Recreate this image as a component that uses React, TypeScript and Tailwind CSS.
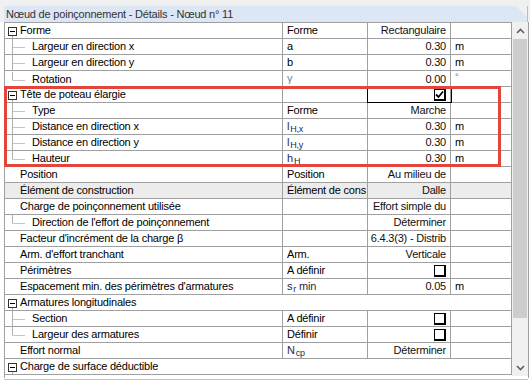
import type { ReactNode } from "react";

type Kind = "plain" | "parent" | "child" | "last";

type Row = {
  label: string;
  kind: Kind;
  symbol?: ReactNode;
  value?: ReactNode;
  unit?: ReactNode;
  span?: boolean;
  shaded?: boolean;
  focus?: boolean;
};

function Box({ checked = false }: { checked?: boolean }) {
  return (
    <span className="inline-flex w-[12px] h-[12px] items-center justify-center border border-black border-r-2 border-b-2 bg-white">
      {checked && (
        <svg width="9" height="9" viewBox="0 0 9 9">
          <path d="M1 4.5 L3.5 7 L8 1.5" fill="none" stroke="#000" strokeWidth="1.8" />
        </svg>
      )}
    </span>
  );
}

function Sub({ base, sub, after }: { base: string; sub: string; after?: string }) {
  return (
    <span className="text-[#1c2a48]">
      {base}
      <span className="text-[9px] relative top-[2px] ml-[1px]">{sub}</span>
      {after}
    </span>
  );
}

const rows: Row[] = [
  { label: "Forme", kind: "parent", symbol: "Forme", value: "Rectangulaire" },
  { label: "Largeur en direction x", kind: "child", symbol: "a", value: "0.30", unit: "m" },
  { label: "Largeur en direction y", kind: "child", symbol: "b", value: "0.30", unit: "m" },
  {
    label: "Rotation",
    kind: "last",
    symbol: <span className="text-[#6d86b2]">γ</span>,
    value: "0.00",
    unit: <span className="text-[9px] text-[#666] relative -top-[2px]">°</span>,
  },
  { label: "Tête de poteau élargie", kind: "parent", value: <Box checked />, focus: true },
  { label: "Type", kind: "child", symbol: "Forme", value: "Marche" },
  { label: "Distance en direction x", kind: "child", symbol: <Sub base="l" sub="H,x" />, value: "0.30", unit: "m" },
  { label: "Distance en direction y", kind: "child", symbol: <Sub base="l" sub="H,y" />, value: "0.30", unit: "m" },
  { label: "Hauteur", kind: "last", symbol: <Sub base="h" sub="H" />, value: "0.30", unit: "m" },
  { label: "Position", kind: "plain", symbol: "Position", value: "Au milieu de" },
  { label: "Élément de construction", kind: "plain", symbol: "Élément de cons", value: "Dalle", shaded: true },
  { label: "Charge de poinçonnement utilisée", kind: "plain", value: "Effort simple du" },
  { label: "Direction de l'effort de poinçonnement", kind: "last", value: "Déterminer" },
  { label: "Facteur d'incrément de la charge β", kind: "plain", value: "6.4.3(3) - Distrib" },
  { label: "Arm. d'effort tranchant", kind: "plain", symbol: "Arm.", value: "Verticale" },
  { label: "Périmètres", kind: "plain", symbol: "A définir", value: <Box /> },
  {
    label: "Espacement min. des périmètres d'armatures",
    kind: "plain",
    symbol: <Sub base="s" sub="r" after=" min" />,
    value: "0.05",
    unit: "m",
  },
  { label: "Armatures longitudinales", kind: "parent", span: true },
  { label: "Section", kind: "child", symbol: "A définir", value: <Box /> },
  { label: "Largeur des armatures", kind: "last", symbol: "Définir", value: <Box /> },
  { label: "Effort normal", kind: "plain", symbol: <Sub base="N" sub="cp" />, value: "Déterminer" },
  { label: "Charge de surface déductible", kind: "parent", span: true },
];

function Tree({ kind }: { kind: Kind }) {
  if (kind === "plain") return <span className="w-[15px] shrink-0" />;
  if (kind === "parent")
    return (
      <svg width="15" height="15" className="shrink-0">
        <line x1="7.5" y1="12" x2="7.5" y2="15" stroke="#b0b0b0" />
        <rect x="3.5" y="4.5" width="8" height="8" fill="#fff" stroke="#333" />
        <line x1="5" y1="8.5" x2="10" y2="8.5" stroke="#000" />
      </svg>
    );
  return (
    <svg width="27" height="15" className="shrink-0">
      <line x1="7.5" y1="0" x2="7.5" y2={kind === "last" ? 8.5 : 15} stroke="#b0b0b0" />
      <line x1="8" y1="8.5" x2="20" y2="8.5" stroke="#c4c4c4" />
    </svg>
  );
}

function TableRow({ row }: { row: Row }) {
  const bg = row.shaded ? "bg-[#ececec]" : "bg-white";
  const first = (
    <div className="flex items-center h-full overflow-hidden whitespace-nowrap">
      <Tree kind={row.kind} />
      <span>{row.label}</span>
    </div>
  );
  if (row.span) {
    return <div className={`h-[16px] border-b border-[#a0a0a0] border-r ${bg}`}>{first}</div>;
  }
  return (
    <div className={`grid grid-cols-[278px_85px_83px_61px] h-[16px] border-b border-[#a0a0a0] ${bg}`}>
      <div className="border-r border-[#a0a0a0] overflow-hidden">{first}</div>
      <div className="border-r border-[#a0a0a0] pl-[4px] overflow-hidden whitespace-nowrap">{row.symbol}</div>
      <div
        className={`border-r border-[#a0a0a0] pr-[4px] flex items-center justify-end overflow-hidden whitespace-nowrap text-[#111] ${
          row.focus ? "outline outline-black" : ""
        }`}
      >
        {row.value}
      </div>
      <div className="border-r border-[#a0a0a0] pl-[4px] whitespace-nowrap">{row.unit}</div>
    </div>
  );
}

export default function App() {
  return (
    <div className="relative w-[530px] h-[381px] bg-white overflow-hidden font-['Liberation_Sans',Arial,sans-serif] text-[11px] leading-[15px] tracking-[-0.2px] text-black">
      <div className="h-[6px] bg-[#f0f0f0]" />
      <div className="flex bg-[#f0f0f0]">
        <div className="ml-[4px] w-[523px] h-[16px] bg-[#dce6f4] pl-[2px] pt-[1px] text-[#333] [clip-path:polygon(0_0,calc(100%-11px)_0,100%_11px,100%_100%,0_100%)]">
          Nœud de poinçonnement - Détails - Nœud n° 11
        </div>
        <div className="w-[1px] bg-[#b9b4e6]" />
      </div>
      <div className="flex">
        <div className="ml-[4px] w-[508px] border-l border-t border-[#a0a0a0]">
          {rows.map((r) => (
            <TableRow key={r.label} row={r} />
          ))}
        </div>
        <div className="w-[16px] h-[354px] bg-[#f0f0f0] flex flex-col items-center">
          <div className="h-[17px] flex items-center justify-center">
            <svg width="9" height="6" viewBox="0 0 9 6">
              <path d="M1 5 L4.5 1.5 L8 5" fill="none" stroke="#606060" strokeWidth="1.6" />
            </svg>
          </div>
          <div className="w-[14px] h-[279px] bg-[#cdcdcd]" />
          <div className="flex-1 flex items-end justify-center pb-[5px]">
            <svg width="9" height="6" viewBox="0 0 9 6">
              <path d="M1 1 L4.5 4.5 L8 1" fill="none" stroke="#606060" strokeWidth="1.6" />
            </svg>
          </div>
        </div>
        <div className="w-[1px] h-[356px] bg-[#a0a0a0]" />
      </div>
      <div className="ml-[4px] mt-[1px] w-[524px] h-[1px] bg-[#b4c3e8]" />
      <div className="absolute left-[4px] top-[86px] w-[497px] h-[81px] border-[3px] border-[#e2453c]" />
    </div>
  );
}
